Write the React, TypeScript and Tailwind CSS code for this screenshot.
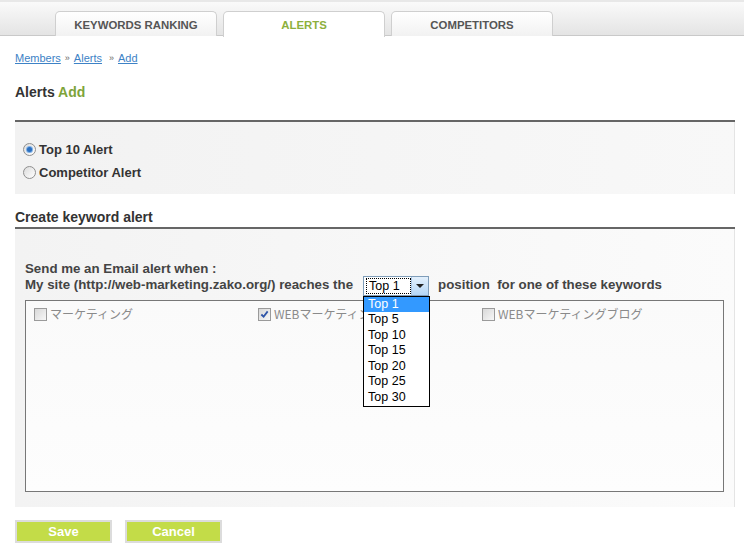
import { useState } from "react";

const tabs = [
  { label: "KEYWORDS RANKING", active: false },
  { label: "ALERTS", active: true },
  { label: "COMPETITORS", active: false },
];

const positions = ["Top 1", "Top 5", "Top 10", "Top 15", "Top 20", "Top 25", "Top 30"];

const keywords = [
  { label: "マーケティング", checked: false },
  { label: "WEBマーケティング", checked: true },
  { label: "WEBマーケティングブログ", checked: false },
];

function Radio({ checked }: { checked: boolean }) {
  return (
    <span className="relative inline-flex h-[13px] w-[13px] items-center justify-center rounded-full border border-[#8f8f8f] bg-gradient-to-br from-[#dcdcdc] to-white">
      {checked && <span className="h-[5px] w-[5px] rounded-full bg-[#2b6fbf] ring-1 ring-[#7fb0e6]" />}
    </span>
  );
}

function Check({ checked }: { checked: boolean }) {
  return (
    <span className="inline-flex h-[13px] w-[13px] shrink-0 items-center justify-center border border-[#9a9a9a] bg-gradient-to-br from-[#d8d8d8] to-[#f7f7f7]">
      {checked && (
        <svg viewBox="0 0 10 10" className="h-[9px] w-[9px]">
          <path d="M1.5 5 L4 7.5 L8.5 1.5" fill="none" stroke="#2f55a8" strokeWidth="2" />
        </svg>
      )}
    </span>
  );
}

export default function App() {
  const [alertType, setAlertType] = useState("top10");
  const [open] = useState(true);

  return (
    <div className="min-h-[558px] bg-white font-['Liberation_Sans',Arial,sans-serif] text-[#333]">
      {/* tab bar */}
      <div className="h-[36px] border-t-2 border-[#e8e8e8] border-b border-b-[#c9c9c9] bg-gradient-to-b from-[#fafafa] to-[#e4e4e4] pt-[9px] pl-[55px]">
        <div className="flex h-[26px] gap-[6px]">
          {tabs.map((t) => (
            <div
              key={t.label}
              className={
                t.active
                  ? "-mb-px flex h-[26px] w-[162px] items-center justify-center rounded-t-[5px] border border-b-0 border-[#cfcfcf] bg-white pt-[3px] text-[11.4px] font-bold text-[#8db03c]"
                  : "flex h-[25px] w-[162px] items-center justify-center rounded-t-[5px] border border-b-0 border-[#cfcfcf] bg-gradient-to-b from-white to-[#f2f2f2] pt-[3px] text-[11.4px] font-bold text-[#555]"
              }
            >
              {t.label}
            </div>
          ))}
        </div>
      </div>

      <div className="pl-[15px] pr-[9px]">
        {/* breadcrumb */}
        <div className="mt-[15px] flex h-[14px] items-center text-[11px] leading-[14px]">
          <a className="text-[#3d82c6] underline">Members</a>
          <span className="mx-[4px] text-[9px] text-[#666]">»</span>
          <a className="text-[#3d82c6] underline">Alerts</a>
          <span className="ml-[7px] mr-[4px] text-[9px] text-[#666]">»</span>
          <a className="text-[#3d82c6] underline">Add</a>
        </div>

        <h1 className="mt-[19px] text-[14px] leading-[17px] font-bold text-[#333]">
          Alerts <span className="text-[#7ea43a]">Add</span>
        </h1>

        {/* alert type */}
        <div className="mt-[19px] border-t-2 border-[#666]">
          <div className="h-[72px] border-r border-[#e4e4e4] bg-gradient-to-r from-[#f2f2f2] to-[#f8f8f8] pt-[16px] pl-[8px]">
            {[
              { key: "top10", label: "Top 10 Alert" },
              { key: "competitor", label: "Competitor Alert" },
            ].map((r) => (
              <label
                key={r.key}
                onClick={() => setAlertType(r.key)}
                className="flex h-[23px] items-center gap-[3px] text-[13px] font-bold text-[#333]"
              >
                <Radio checked={alertType === r.key} />
                {r.label}
              </label>
            ))}
          </div>
        </div>

        <h2 className="mt-[15px] text-[14px] leading-[17px] font-bold text-[#333]">Create keyword alert</h2>

        {/* keyword alert box */}
        <div className="mt-[1px] border-t-2 border-[#666]">
          <div className="h-[278px] border-r border-[#e4e4e4] bg-gradient-to-r from-[#f3f3f3] to-[#fbfbfb] px-[10px] pt-[32px] pb-[15px]">
            <div className="text-[13.3px] leading-[16px] font-bold text-[#444]">Send me an Email alert when :</div>
            <div className="flex h-[16px] items-center text-[13.3px] leading-[16px] font-bold text-[#444]">
              <span>My site (http://web-marketing.zako.org/) reaches the</span>
              <div className="relative mt-[1px] ml-[10px] h-[20px] w-[66px]">
                <div className="flex h-[20px] w-[66px] items-center border border-[#7f9db9] bg-white">
                  <span className="ml-[2px] flex h-[16px] flex-1 items-center border border-dotted border-black pl-[2px] text-[12.5px] font-normal text-black">
                    Top 1
                  </span>
                  <span className="flex h-[18px] w-[17px] items-center justify-center border-l border-[#a9c6e6] bg-gradient-to-b from-[#e3f0fc] to-[#b4d6f6]">
                    <svg viewBox="0 0 8 4" className="h-[4px] w-[8px]">
                      <path d="M0 0 H8 L4 4 Z" fill="#222" />
                    </svg>
                  </span>
                </div>
                {open && (
                  <ul className="absolute top-[20px] left-0 z-10 w-[67px] border border-black bg-white font-normal">
                    {positions.map((p, i) => (
                      <li
                        key={p}
                        className={
                          i === 0
                            ? "h-[15.6px] bg-[#3399ff] pl-[4px] text-[12.5px] leading-[15.6px] text-white"
                            : "h-[15.6px] pl-[4px] text-[12.5px] leading-[15.6px] text-black"
                        }
                      >
                        {p}
                      </li>
                    ))}
                  </ul>
                )}
              </div>
              <span className="ml-[9px]">position&nbsp; for one of these keywords</span>
            </div>

            <div className="mt-[7px] grid h-[192px] grid-cols-[224px_224px_1fr] content-start border border-[#777] bg-gradient-to-b from-[#fafafa] to-[#fdfdfd] pt-[6px] pl-[8px]">
              {keywords.map((k) => (
                <label
                  key={k.label}
                  className="flex h-[14px] items-center gap-[3px] font-['Noto_Sans_CJK_JP',sans-serif] text-[12px] whitespace-nowrap text-[#8a8a8a]"
                >
                  <Check checked={k.checked} />
                  {k.label}
                </label>
              ))}
            </div>
          </div>
        </div>

        {/* buttons */}
        <div className="mt-[13px] flex gap-[13px]">
          <button className="h-[23px] w-[97px] border-2 border-[#dcdcdc] bg-[#c3dc48] text-[13px] font-bold text-white">
            Save
          </button>
          <button className="h-[23px] w-[97px] border-2 border-[#dcdcdc] bg-[#c3dc48] text-[13px] font-bold text-white">
            Cancel
          </button>
        </div>
      </div>
    </div>
  );
}
